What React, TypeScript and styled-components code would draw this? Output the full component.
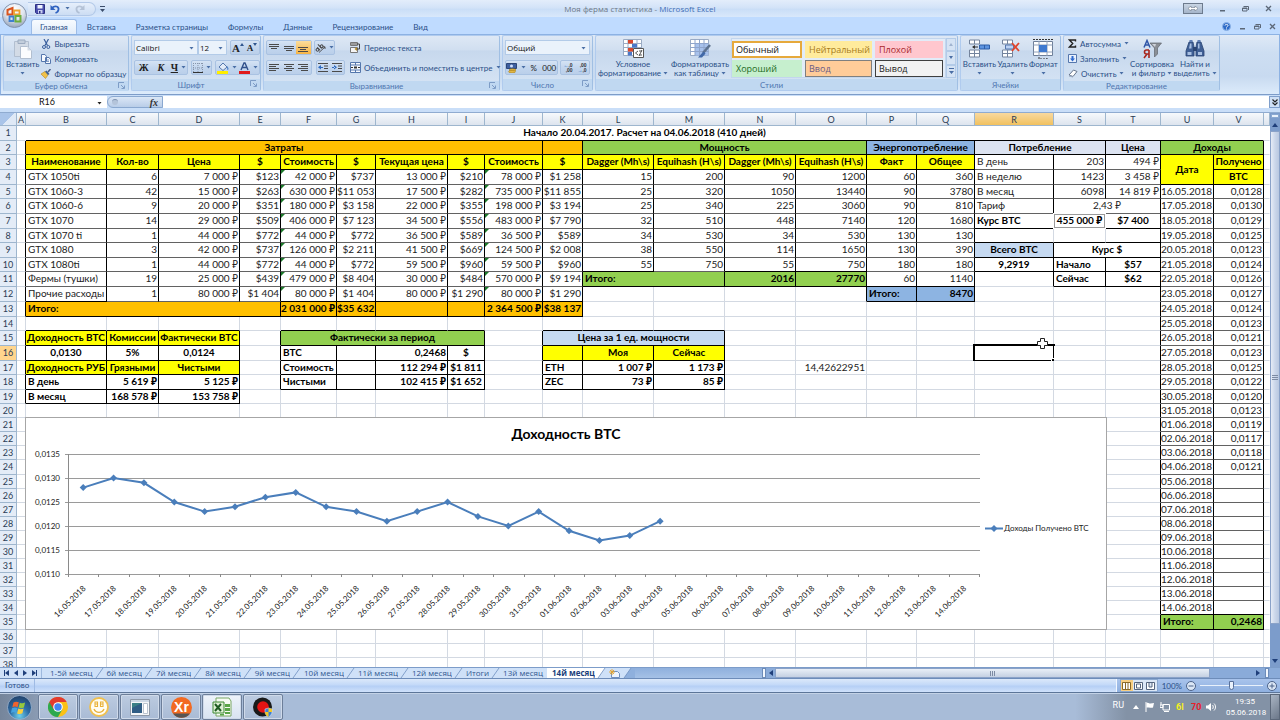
import React from "react";
import styled, { createGlobalStyle, css } from "styled-components";

const UI = 'Lato, "Noto Sans", sans-serif';
const WIDE = '"Open Sans", "Noto Sans", sans-serif';
const SHEET = 'Lato, "Noto Sans", sans-serif';

const Global = createGlobalStyle`
  * { box-sizing: border-box; }
  body { margin: 0; font-family: ${UI}; font-size: 8px; line-height: 10px; color: #2a4f87; overflow: hidden; }
  button, input, select { font: inherit; color: inherit; margin: 0; padding: 0; border: 0; background: none; }
  svg { display: block; flex: none; }
`;

/* ---------- frame ---------- */

const Shell = styled.div`
  display: flex;
  flex-direction: column;
  height: 100vh;
  background: #bfdbff;
`;

const TitleBar = styled.header`
  position: relative;
  display: grid;
  grid-template-columns: 1fr auto 1fr;
  align-items: center;
  height: 17px;
  background: linear-gradient(#e3edfb, #d3e3f8 45%, #cadef7 55%, #d9e8fb);
`;

const QuickAccess = styled.div`
  display: flex;
  align-items: center;
  gap: 4px;
  padding-left: 28px;
`;

const QuickPill = styled.div`
  display: flex;
  align-items: center;
  gap: 5px;
  height: 14px;
  width: 68px;
  padding-left: 7px;
  border: 1px solid #b3c9e8;
  border-left: 0;
  border-radius: 0 7px 7px 0;
  background: linear-gradient(#e6effb, #ccddf3);
`;

const Orb = styled.button`
  position: absolute;
  left: 2px;
  top: 3px;
  width: 25px;
  height: 25px;
  z-index: 2;
`;

const WindowTitle = styled.h1`
  margin: 0;
  font-family: ${WIDE};
  font-size: 8px;
  line-height: 12px;
  font-weight: 400;
  color: #6d7785;
  span { color: #3f6db5; }
`;

const WindowButtons = styled.div<{ $gap: number; $pad: number }>`
  display: flex;
  align-items: center;
  justify-content: flex-end;
  gap: ${(p) => p.$gap}px;
  padding-right: ${(p) => p.$pad}px;
  margin-left: auto;
`;

const PlainButton = styled.button`
  display: flex;
  align-items: center;
  justify-content: center;
`;

const Resizer = styled(PlainButton)`
  width: 20px;
  height: 11px;
  border: 1px solid #6d7b8e;
  background: linear-gradient(#c9d5e4, #a5b5ca);
`;

const TabStrip = styled.nav`
  display: flex;
  align-items: stretch;
  height: 17px;
  padding: 2px 0 0 31px;
  background: #bfdbff;
`;

const RibbonTab = styled.button<{ $on?: boolean }>`
  padding: 0 ${(p) => (p.$on ? 8 : 10)}px;
  line-height: 14px;
  ${(p) =>
    p.$on &&
    css`
      background: linear-gradient(#f7fbff, #e3edf9);
      border: 1px solid #9dbce6;
      border-bottom: 0;
      border-radius: 3px 3px 0 0;
    `}
`;

/* ---------- ribbon ---------- */

const RibbonBar = styled.section`
  display: flex;
  gap: 2px;
  height: 61px;
  padding: 0 2px 3px;
  border: 1px solid #8db2e3;
  border-bottom: 1px solid #7d9cc8;
  background: linear-gradient(#dfe9f6, #cddef2 30%, #c8daf0 70%, #dcebfb);
`;

const Group = styled.section<{ $w: number }>`
  display: flex;
  flex-direction: column;
  width: ${(p) => p.$w}px;
  border: 1px solid #b0cbee;
  border-right-color: #a0bfe3;
  border-radius: 2px;
  background: linear-gradient(#dee8f5, #d1dff0 25%, #c7d8ed 28%, #d7e5f5);
`;

const GroupBody = styled.div<{ $gap?: number; $pad?: number }>`
  display: flex;
  flex: 1;
  gap: ${(p) => p.$gap ?? 0}px;
  padding: 0 ${(p) => p.$pad ?? 2}px;
`;

const GroupFooter = styled.footer`
  position: relative;
  display: flex;
  align-items: center;
  justify-content: center;
  height: 11px;
  padding-right: 10px;
  color: #4f76b0;
  background: #c0d8f1;
`;

const Launcher = styled.button`
  position: absolute;
  right: 3px;
  top: 1px;
`;

const Stack = styled.div<{ $gap?: number; $top?: number }>`
  display: flex;
  flex-direction: column;
  gap: ${(p) => p.$gap ?? 0}px;
  padding-top: ${(p) => p.$top ?? 0}px;
`;

const Line = styled.div<{ $gap?: number }>`
  display: flex;
  align-items: center;
  gap: ${(p) => p.$gap ?? 0}px;
`;

const BigButton = styled.button<{ $w: number }>`
  display: flex;
  flex-direction: column;
  align-items: center;
  width: ${(p) => p.$w}px;
  padding-top: 2px;
  line-height: 9px;
  white-space: nowrap;
`;

const BigIcon = styled.span`
  display: flex;
  align-items: center;
  height: 22px;
`;

const BigCaret = styled.span`
  padding-top: 3px;
`;

const SmallButton = styled.button`
  display: flex;
  align-items: center;
  gap: 3px;
  height: 15px;
  white-space: nowrap;
`;

const Cluster = styled.div<{ $w: number; $push?: boolean }>`
  display: flex;
  width: ${(p) => p.$w}px;
  height: 15px;
  margin-left: ${(p) => (p.$push ? "auto" : 0)};
  border: 1px solid #a9c2e2;
  border-radius: 2px;
  background: linear-gradient(#d5e3f4, #c3d6ee 50%, #bacfea);
`;

const Tool = styled.button<{ $on?: boolean }>`
  display: flex;
  flex: 1;
  align-items: center;
  justify-content: center;
  gap: 3px;
  color: #222;
  ${(p) => p.$on && "background: linear-gradient(#fbdd9c, #f6b445);"}
`;

const SelectWrap = styled.label<{ $w: number }>`
  position: relative;
  display: flex;
  width: ${(p) => p.$w}px;
  height: 15px;
  border: 1px solid #b3cbe8;
  background: #eaf2fb;
  color: #111;
  font-family: ${WIDE};
  select { appearance: none; width: 100%; padding-left: 1px; outline: 0; }
  svg { position: absolute; right: 3px; top: 6px; pointer-events: none; }
`;

const Divider = styled.i`
  width: 1px;
  height: 42px;
  margin: 3px 3px 0 2px;
  background: #a9c2e2;
`;

const Gallery = styled.div`
  display: grid;
  grid-template-columns: 70px 67px 68px;
  grid-auto-rows: 17px;
  gap: 2px 3px;
  padding: 2px 2px 0 0;
  height: 40px;
  margin-top: 2px;
  background: #e2ecf8;
  border: 1px solid #c3d6ee;
`;

const StyleSwatch = styled.button<{ $bg: string; $fg: string; $bd?: string; $thick?: boolean }>`
  padding-left: ${(p) => (p.$thick ? 2 : 3)}px;
  text-align: left;
  font-family: ${WIDE};
  font-size: 9px;
  line-height: 12px;
  background: ${(p) => p.$bg};
  color: ${(p) => p.$fg};
  border: ${(p) => (p.$thick ? 2 : 1)}px solid ${(p) => p.$bd ?? p.$bg};
`;

const GalleryScroll = styled.div`
  display: grid;
  grid-template-rows: repeat(3, 1fr);
  width: 10px;
  height: 40px;
  margin: 2px 0 0 0;
  button { display: flex; align-items: center; justify-content: center; border: 1px solid #b3cbe8; background: #d5e3f4; }
`;

/* ---------- formula bar ---------- */

const FormulaBar = styled.div`
  display: flex;
  height: 18px;
  padding: 1px 0 4px;
  background: #c9def8;
  border-bottom: 1px solid #8fabd0;
`;

const NameBox = styled.label`
  position: relative;
  display: flex;
  width: 107px;
  background: #fff;
  color: #111;
  input { width: 94px; text-align: center; font-size: 9px; }
  svg { position: absolute; right: 5px; top: 6px; }
`;

const FxArea = styled.div`
  display: flex;
  justify-content: space-between;
  align-items: center;
  width: 56px;
  padding: 0 4px;
  border-radius: 7px 0 0 7px;
  border: 1px solid #8aa8d0;
  background: linear-gradient(#dbe7f6, #b9cde8);
  button { font: italic 700 10px "Liberation Serif", serif; color: #333; }
`;

const Knob = styled.i`
  width: 6px;
  height: 6px;
  border-radius: 50%;
  background: #b4c4da;
  border-top: 1px solid #7f93b0;
`;

const FormulaInput = styled.input`
  flex: 1;
  background: #fff !important;
`;

const ExpandButton = styled(PlainButton)`
  width: 11px;
  background: #cfe0f5;
  border: 1px solid #7f9fcb;
`;

/* ---------- sheet ---------- */

const Workspace = styled.main`
  display: flex;
  flex: 1;
  min-height: 0;
`;

const SheetView = styled.div`
  position: relative;
  flex: 1;
  min-width: 0;
  overflow: hidden;
  background: #fff;
`;

const Grid = styled.table`
  width: 100%;
  table-layout: fixed;
  border-collapse: separate;
  border-spacing: 0;
  font-family: ${SHEET};
  font-size: 10px;
  line-height: 11px;
  color: #222;
`;

const ColHead = styled.th<{ $on?: boolean }>`
  height: 13px;
  padding: 0;
  font-weight: 400;
  font-size: 9px;
  line-height: 11px;
  color: #2b3c55;
  border-right: 1px solid #9eb6ce;
  border-bottom: 1px solid #9eb6ce;
  background: ${(p) => (p.$on ? "linear-gradient(#f9d99f, #f1c15f)" : "linear-gradient(#f6f9fc, #dde4ee)")};
`;

const Corner = styled(ColHead)`
  background: linear-gradient(135deg, #a9c4e9 50%, #dfe9f6 50%);
`;

const RowHead = styled.th<{ $on?: boolean; $h: number }>`
  height: ${(p) => p.$h}px;
  padding: 0;
  font-weight: 400;
  font-size: 9px;
  line-height: 12px;
  color: #2b3c55;
  border-right: 1px solid #9eb6ce;
  border-bottom: 1px solid #9eb6ce;
  background: ${(p) => (p.$on ? "#ffd58d" : "#e4ecf7")};
`;

const ALIGN = { l: "left", c: "center", r: "right" } as const;

const Td = styled.td<{ $a: "l" | "c" | "r"; $b?: boolean; $bg?: string; $right: string; $bottom: string }>`
  position: relative;
  padding: ${(p) => ({ l: "0 0 1px 2px", c: "0 0 1px", r: "0 1px 1px 0" })[p.$a]};
  white-space: nowrap;
  text-align: ${(p) => ALIGN[p.$a]};
  font-weight: ${(p) => (p.$b ? 700 : 400)};
  color: ${(p) => (p.$b ? "#000" : "#222")};
  background: ${(p) => p.$bg ?? "#fff"};
  border-right: 1px solid ${(p) => p.$right};
  border-bottom: 1px solid ${(p) => p.$bottom};
`;

const ErrorFlag = styled.i`
  position: absolute;
  left: 0;
  top: 0;
  border-top: 4px solid #1d7a2c;
  border-right: 4px solid transparent;
`;

const Selection = styled.i`
  position: absolute;
  inset: -2px;
  border: 2px solid #000;
  &::after {
    content: "";
    position: absolute;
    right: -3px;
    bottom: -3px;
    width: 4px;
    height: 4px;
    background: #000;
    border: solid #fff;
    border-width: 1px 0 0 1px;
  }
`;

const CopyFrame = styled.i`
  position: absolute;
  inset: -1px;
  border: 1px solid #fff;
  outline: 1px solid #9a9a9a;
  outline-offset: -2px;
`;

const ChartFrame = styled.figure`
  position: absolute;
  left: 25px;
  top: 304px;
  margin: 0;
  border: 1px solid #a6a6a6;
  background: #fff;
  font-family: ${SHEET};
`;

const Pointer = styled.div`
  position: absolute;
  left: 1037px;
  top: 225px;
`;

const VScroll = styled.div`
  display: flex;
  flex-direction: column;
  width: 10px;
  background: #7c9ccb;
`;

const VSplit = styled.i`
  height: 4px;
  margin: 1px;
  background: #e9f1fb;
  border: 1px solid #8aa8d0;
`;

const VThumb = styled.div`
  display: flex;
  align-items: center;
  justify-content: center;
  flex: 498 0 0;
  border: 1px solid #8aa2c8;
  background: linear-gradient(90deg, #e6ecf6, #cbd7ea 50%, #b9c8e0);
`;

const VRest = styled.div`
  display: flex;
  flex: 41 0 0;
  align-items: flex-end;
  justify-content: center;
  padding-bottom: 3px;
`;

const ScrollArrow = styled(PlainButton)`
  min-width: 9px;
  height: 12px;
`;

/* ---------- sheet tabs ---------- */

const SheetBar = styled.nav`
  display: flex;
  height: 12px;
  border-top: 1px solid #7c9cc9;
  border-bottom: 1px solid #6d8cb9;
  background: linear-gradient(#8fb0dd, #a5c1e6);
  font-family: ${WIDE};
`;

const NavButtons = styled.div`
  display: flex;
  align-items: center;
  justify-content: space-between;
  width: 42px;
  padding: 0 4px;
  background: #cfe1f8;
  border-right: 1px solid #9eb9de;
`;

const TabList = styled.div`
  display: flex;
  padding-left: 8px;
  background: #cfe1f8;
`;

const SheetTab = styled.button<{ $on?: boolean }>`
  display: flex;
  align-items: center;
  color: ${(p) => (p.$on ? "#1b3f7c" : "#2f568f")};
  font-weight: ${(p) => (p.$on ? 700 : 400)};
  background: ${(p) => (p.$on ? "#fff" : "#cfe1f8")};
  padding-left: ${(p) => (p.$on ? 5 : 0)}px;
  line-height: 10px;
  white-space: nowrap;
`;

const HScroll = styled.div`
  display: flex;
  align-items: center;
  flex: 0 1 518px;
  margin-left: auto;
  background: #8aabd9;
`;

const HSplit = styled.i`
  width: 4px;
  height: 10px;
  background: #f3f8fe;
  border: 1px solid #6d8cb9;
`;

const HThumb = styled.div`
  display: flex;
  align-items: center;
  justify-content: center;
  flex: 432 0 0;
  height: 10px;
  border: 1px solid #8aa2c8;
  background: linear-gradient(#e9eff7, #c4d0e2);
`;

const HRest = styled.div`
  display: flex;
  justify-content: flex-end;
  flex: 51 0 0;
  padding-right: 4px;
`;

/* ---------- status bar ---------- */

const StatusBar = styled.footer`
  display: flex;
  align-items: stretch;
  height: 14px;
  border-bottom: 1px solid #5c7598;
  background: linear-gradient(#dbe8fa, #c3d9f8 45%, #b5cff5 55%, #cfe1fb);
`;

const StatusText = styled.div`
  width: 35px;
  padding-left: 5px;
  line-height: 13px;
  border-right: 1px solid #9fbbe4;
`;

const StatusTools = styled.div`
  display: flex;
  align-items: center;
  gap: 4px;
  margin-left: auto;
  padding: 0 3px;
  border-left: 1px solid #f2f7fe;
  background: linear-gradient(#a9c4ec, #8fb0e0);
`;

const Views = styled.div`
  display: flex;
  border: 1px solid #8aa8d0;
  background: #dbe7f6;
`;

const ViewButton = styled(PlainButton)<{ $on?: boolean }>`
  width: 12px;
  height: 11px;
  background: ${(p) => (p.$on ? "#f8cf83" : "transparent")};
`;

const Zoom = styled.input`
  width: 63px;
  height: 11px;
  appearance: none;
  background: linear-gradient(transparent 5px, #e9f1fb 5px, #e9f1fb 6px, transparent 6px);
  &::-webkit-slider-thumb {
    appearance: none;
    width: 5px;
    height: 9px;
    border: 1px solid #58709a;
    border-radius: 0 0 3px 3px;
    background: #e9f1fb;
  }
`;

/* ---------- taskbar ---------- */

const Taskbar = styled.footer`
  display: flex;
  height: 27px;
  border-top: 1px solid #c3d2e6;
  background: linear-gradient(90deg, #a8bcd8 84%, #8392a6 88%);
`;

const StartButton = styled(PlainButton)`
  width: 38px;
  background: linear-gradient(90deg, #75859b, #8a9bb3);
`;

const TaskButton = styled(PlainButton)<{ $on?: boolean }>`
  width: 40px;
  margin-right: 1px;
  border: 1px solid #6c7e99;
  border-radius: 2px;
  box-shadow: inset 0 0 0 1px #cfdaea;
  background: ${(p) => (p.$on ? "linear-gradient(#eef3fa, #d8e3f1)" : "linear-gradient(#bccbe0, #a9bbd5)")};
`;

const Tray = styled.div`
  display: flex;
  align-items: center;
  gap: 6px;
  margin-left: auto;
  color: #fff;
  font-family: Roboto, "Noto Sans", sans-serif;
`;

const Language = styled.span`
  margin-right: 3px;
  padding-bottom: 4px;
  font-size: 9px;
`;

const Reading = styled.b<{ $c: string }>`
  width: 9px;
  font-size: 9px;
  color: ${(p) => p.$c};
`;

const Clock = styled.time`
  width: 38px;
  margin-left: 4px;
  text-align: center;
  line-height: 11px;
  white-space: nowrap;
`;

const ShowDesktop = styled.button`
  width: 10px;
  height: 26px;
  border: 1px solid #5b6779 !important;
  background: linear-gradient(135deg, #a9b4c3, #6b7789) !important;
`;

/* ---------- icons ---------- */

const Caret = ({ c = "#4a6ea5" }: { c?: string }) => (
  <svg width="5" height="3" viewBox="0 0 5 3"><path d="M0.500 0h4L2.500 2.500z" fill={c} /></svg>
);
const LaunchIcon = () => (
  <svg width="7" height="7" viewBox="0 0 7 7" fill="none" stroke="#7d9cc6"><path d="M.5 6V.5H6M3 3l3 3M6.500 3.500v3h-3" /></svg>
);
const MinIcon = () => <svg width="7" height="7" viewBox="0 0 7 7"><path d="M1 5h5v1.500H1z" fill="#5c6878" /></svg>;
const RestoreIcon = () => (
  <svg width="7" height="7" viewBox="0 0 7 7" fill="none" stroke="#5c6878"><path d="M1.500 1.500h5v3.500M.5 3h4.500v3H.5zM.5 3.500h4.500" /></svg>
);
const CloseIcon = () => (
  <svg width="7" height="7" viewBox="0 0 7 7" stroke="#5c6878" strokeWidth="1.300"><path d="M1 1l5 5M6 1L1 6" /></svg>
);
const OfficeOrb = () => (
  <svg width="25" height="25" viewBox="0 0 25 25">
    <defs>
      <radialGradient id="orb" cx=".5" cy=".25" r=".8">
        <stop offset="0" stopColor="#fff" /><stop offset=".5" stopColor="#dfe5ee" /><stop offset="1" stopColor="#8e9db5" />
      </radialGradient>
    </defs>
    <circle cx="12.500" cy="12.500" r="12" fill="url(#orb)" stroke="#8494ad" />
    <path d="M5.500 7l5-2v6.500h-5z" fill="none" stroke="#d9541e" strokeWidth="2" />
    <path d="M12 7.500h5.500v4H12z" fill="none" stroke="#eda12e" strokeWidth="1.800" />
    <path d="M7.500 13.500h4v4.500h-4z" fill="none" stroke="#3f7fd0" strokeWidth="1.800" />
    <path d="M13.500 13h5v5.500h-5z" fill="none" stroke="#6cae3e" strokeWidth="2" />
  </svg>
);
const SaveIcon = () => (
  <svg width="10" height="10" viewBox="0 0 10 10">
    <path d="M.5.5h9v9h-8l-1-1z" fill="#4b4fae" stroke="#2e3285" /><path d="M2.500 1h5v3.500h-5z" fill="#eef3ff" /><path d="M3 6h4.500v3.500H3z" fill="#c9cff0" /><path d="M4 7h1.500v2.500H4z" fill="#2e3285" />
  </svg>
);
const UndoIcon = ({ flip }: { flip?: boolean }) => (
  <svg width="10" height="10" viewBox="0 0 10 10" fill="none" opacity={flip ? 0.4 : 1}>
    <g transform={flip ? "matrix(-1 0 0 1 10 0)" : undefined}>
      <path d="M2 4c3-3 7-1.500 6.500 1.500C8.300 7.500 7 8.500 5.500 9" stroke={flip ? "#7d8da5" : "#2f62c0"} strokeWidth="1.800" /><path d="M.5 1v5h5z" fill={flip ? "#7d8da5" : "#2f62c0"} />
    </g>
  </svg>
);
const HelpIcon = () => (
  <svg width="9" height="9" viewBox="0 0 9 9"><circle cx="4.500" cy="4.500" r="4" fill="#2d6bc8" stroke="#8fb4e6" /><path d="M3 3.500C3 2 6 2 6 3.500 6 4.500 4.500 4.500 4.500 5.500M4.500 6.500v1" stroke="#fff" fill="none" /></svg>
);
const PasteIcon = () => (
  <svg width="20" height="20" viewBox="0 0 20 20">
    <path d="M1.500 2.500h14v15h-14z" fill="#d3dbe6" stroke="#b2bfd0" /><path d="M5 1h7v3.500H5z" fill="#c3cedc" stroke="#9cabc0" />
    <path d="M7.500 7.500h7l4 4v8h-11z" fill="#fbfcfe" stroke="#b2bfd0" /><path d="M14.500 7.500v4h4z" fill="#d3dbe6" />
  </svg>
);
const CutIcon = () => (
  <svg width="10" height="10" viewBox="0 0 10 10" fill="none" stroke="#3a5f9d"><path d="M3 0l3.500 6.500M7.500 0L4 6.500" strokeWidth="1.200" /><circle cx="3" cy="8" r="1.500" /><circle cx="7.300" cy="8" r="1.500" /></svg>
);
const CopyIcon = () => (
  <svg width="10" height="10" viewBox="0 0 10 10" fill="#f5f9ff" stroke="#5577ad"><path d="M.5.5H4l1.500 2v5h-5zM4.500 3.500H8l1.500 2v4h-5z" /><path d="M6 6h2M6 7.500h2" strokeWidth=".7" /></svg>
);
const BrushIcon = () => (
  <svg width="10" height="10" viewBox="0 0 10 10"><path d="M0 5l4-2.500L7 6 4.500 9.500z" fill="#f1c24a" stroke="#b98a1c" strokeWidth=".6" /><path d="M4 2.500l1.500-1 3 3.500-1.500 1z" fill="#3b5f94" /><path d="M7 3l2.500-3" stroke="#4a5f86" strokeWidth="1.500" /></svg>
);
const Lines = ({ rows, c = "#4a4a4a" }: { rows: [number, number, number][]; c?: string }) => (
  <svg width="11" height="10" viewBox="0 0 11 10" fill={c}>{rows.map(([x, y, w]) => <rect key={y} x={x} y={y} width={w} height="1" />)}</svg>
);
const BordersIcon = () => (
  <svg width="10" height="10" viewBox="0 0 10 10" fill="none" stroke="#8795ab"><path d="M.5 0v9M5 0v9M9.500 0v9M0 .5h10M0 5h10" strokeDasharray="1 1" /><path d="M0 9.500h10" stroke="#333" /></svg>
);
const FillIcon = () => (
  <svg width="12" height="12" viewBox="0 0 12 12"><path d="M2 5l4-4 4 4-4 3.500z" fill="#e3ecf8" stroke="#5577ad" /><path d="M10 4c2 2 1.500 4 .5 4z" fill="#2f6bc0" /><path d="M0 9h11v3H0z" fill="#ffee00" /></svg>
);
const FontColorIcon = () => (
  <svg width="11" height="12" viewBox="0 0 11 12"><path d="M2 8l3-7h1l3 7M3.500 5.500h4" fill="none" stroke="#2f4f8a" strokeWidth="1.400" /><path d="M0 9h11v3H0z" fill="#e01b1b" /></svg>
);
const OrientIcon = () => (
  <svg width="11" height="10" viewBox="0 0 11 10" fill="none" stroke="#4a4a4a">
    <g transform="rotate(-45 5 5)"><circle cx="2" cy="4.500" r="1.400" /><path d="M3.500 2.500v4M6 1v5.500" /><circle cx="7.400" cy="5" r="1.400" /></g>
    <path d="M4 9.500L10 4M7.500 3.800H10V6" strokeWidth=".9" />
  </svg>
);
const IndentIcon = ({ right }: { right?: boolean }) => (
  <svg width="11" height="10" viewBox="0 0 11 10"><path d="M0 0h10v1H0zM6 2.500h4v1H6zM6 5h4v1H6zM0 8h10v1H0z" fill="#4a4a4a" /><path d={right ? "M5 4.300L2 2v4.500zM0 4h3v1H0z" : "M0 4.300L3 2v4.500zM2 4h3v1H2z"} fill="#2f6bc0" /></svg>
);
const WrapIcon = () => (
  <svg width="11" height="11" viewBox="0 0 11 11"><path d="M.5.5h7v3h-7zM.5 5.500h7v5h-7z" fill="#f5f5f5" stroke="#777" /><path d="M1 2h8.500v5H6" fill="none" stroke="#444" /><path d="M7 5v4L4.500 7z" fill="#b08a2c" /></svg>
);
const MergeIcon = () => (
  <svg width="11" height="11" viewBox="0 0 11 11"><path d="M.5.5h10v10H.5z" fill="#f5f9ff" stroke="#5577ad" /><path d="M.5 3h10M.5 8h10M5.500 0v3M5.500 8v3" stroke="#5577ad" /><path d="M1 5.500h2M8 5.500h2" stroke="#333" /><path d="M4 4.500h3v2H4z" fill="#333" /></svg>
);
const MoneyIcon = () => (
  <svg width="12" height="10" viewBox="0 0 12 10"><path d="M.5.5h10v5H.5z" fill="#3e5f9f" stroke="#2c4678" /><circle cx="5.500" cy="3" r="1.500" fill="#cfe0ff" /><ellipse cx="6.500" cy="7" rx="3.500" ry="1.200" fill="#e4b948" stroke="#9c7412" strokeWidth=".5" /><ellipse cx="6" cy="8.700" rx="3.500" ry="1.200" fill="#e4b948" stroke="#9c7412" strokeWidth=".5" /></svg>
);
const DecimalTool = styled.span`
  display: grid;
  font: 700 5px/5px "Liberation Sans", sans-serif;
  color: #333;
  text-align: right;
  em { font-style: normal; color: #2f6bc0; }
`;
const CondIcon = () => (
  <svg width="21" height="20" viewBox="0 0 21 20">
    <path d="M.5.5h18v16H.5z" fill="#fff" stroke="#9aabc4" /><path d="M.5 4.500h18M.5 8.500h18M.5 12.500h18M5 0v17M14 0v17" stroke="#9aabc4" />
    <path d="M5 1h5v3.500H5zM5 9h5v3.500H5z" fill="#d9482e" /><path d="M9 5h5v3.500H9zM5 13h4v3.500H5z" fill="#4a78c8" />
    <path d="M10.500 9.500h10v9h-10z" fill="#fff" stroke="#555" /><path d="M12.500 14l2.500-2M12.500 14l2.500 2M16 12h3M16 16h3M19 11l-3 6" stroke="#444" fill="none" strokeWidth=".9" />
  </svg>
);
const TableIcon = () => (
  <svg width="21" height="20" viewBox="0 0 21 20">
    <path d="M.5.5h18v16H.5z" fill="#fff" stroke="#9aabc4" /><path d="M5 5h13.500v11.500H5z" fill="#a7c1ec" /><path d="M.5 4.500h18M.5 8.500h18M.5 12.500h18M5 0v17M9.500 0v17M14 0v17" stroke="#8fa5cc" />
    <path d="M20 6l-7 8" stroke="#5d728f" strokeWidth="2.500" /><path d="M13.500 12.500l2 2-3.500 4H8z" fill="#4169a8" />
  </svg>
);
const CellsIcon = ({ kind }: { kind: "insert" | "delete" | "format" }) =>
  kind === "format" ? (
    <svg width="21" height="20" viewBox="0 0 21 20"><path d="M.5 2.500h19v14H.5z" fill="#fff" stroke="#6e7f99" /><path d="M.5 6h19M.5 13h19M6 2v15M14 2v15" stroke="#8fa0ba" /><path d="M6 6h8v7H6z" fill="#3f7ad0" /><path d="M0 .5h20M6 18v2h8v-2" stroke="#333" fill="none" strokeDasharray="2 1" /></svg>
  ) : (
    <svg width="21" height="20" viewBox="0 0 21 20">
      <path d="M.5 1h10v4H.5zM.5 11h10v7H.5z" fill="#fff" stroke="#74849d" /><path d="M5.500 1v4M5.500 11v7M.5 14.500h10" stroke="#74849d" />
      {kind === "insert" ? (
        <><path d="M10.500 6h10v4h-10z" fill="#5d94e0" stroke="#2f5fa8" /><path d="M15.500 6v4" stroke="#2f5fa8" /><path d="M4 8h5" stroke="#333" /><path d="M6 6v4L3 8z" fill="#333" /></>
      ) : (
        <><path d="M3.500 6h8v4h-8z" fill="#bcd2f3" stroke="#5577ad" /><path d="M10 4l7 8M17 4l-7 8" stroke="#e0452b" strokeWidth="1.800" /></>
      )}
    </svg>
  );
const SigmaIcon = () => <svg width="9" height="9" viewBox="0 0 9 9"><path d="M7.500 2.500V1H1.500l3.200 3.500L1.500 8h6V6.500" fill="none" stroke="#222" strokeWidth="1.400" /></svg>;
const FillDownIcon = () => <svg width="9" height="9" viewBox="0 0 9 9"><path d="M.5.5h8v8h-8z" fill="#e9f1fd" stroke="#5577ad" /><path d="M3.500 2h2v2.500H7L4.500 7.500 2 4.500h1.500z" fill="#2f6bd0" /></svg>;
const EraserIcon = () => <svg width="10" height="9" viewBox="0 0 10 9"><path d="M1 6l4.500-5L9 2.500 5 7.500z" fill="#fff" stroke="#66758c" /><path d="M1 6l4 1.500v1L1 7.500z" fill="#9aa9bf" /></svg>;
const SortIcon = () => (
  <svg width="20" height="20" viewBox="0 0 20 20" fill="none">
    <path d="M2 8.500l3-7 3 7M3 6h4" stroke="#2f55a8" strokeWidth="1.500" /><path d="M7 11v8M7 11H4.500a2 2 0 000 4H7M5 15l-3 4" stroke="#a8261d" strokeWidth="1.600" />
    <path d="M8 4h11.500l-4 5v6l-3 3V9z" fill="#8b8f96" stroke="#60656e" strokeWidth=".7" /><path d="M10 5h4l-1 3z" fill="#cfd3da" />
  </svg>
);
const BinocularsIcon = () => (
  <svg width="20" height="18" viewBox="0 0 20 18"><path d="M4 2h4l1 5v9H1v-5zM12 2h4l3 9v5h-8V7z" fill="#3f5f95" stroke="#2b4573" strokeWidth=".8" /><path d="M8 7h4v4H8z" fill="#2b4573" /><path d="M2.500 12h4v3h-4zM13 12h4v3h-4zM5 3.500h1.500v5H4zM13 3.500h1.500v5H13z" fill="#a8bfe2" /><path d="M4.500 0h3v2h-3zM12.500 0h3v2h-3z" fill="#5f7fb5" /></svg>
);
const Arrow = ({ d, bar }: { d: "l" | "r" | "u" | "d"; bar?: boolean }) => {
  const path = { l: "M5 0v6L1 3z", r: "M1 0v6l4-3z", u: "M0 5h6L3 1z", d: "M0 1h6L3 5z" }[d];
  return <svg width="6" height="6" viewBox="0 0 6 6" fill="#1f3f7a"><path d={path} />{bar && <path d={d === "l" ? "M0 0h1v6H0z" : "M5 0h1v6H5z"} />}</svg>;
};
const Slant = ({ left, right }: { left: string; right: string }) => (
  <svg width="14" height="10" viewBox="0 0 14 10"><path d="M0 0h10L3 10H0z" fill={left} /><path d="M10 0h4v10H3z" fill={right} /><path d="M10 0L3 10" stroke="#6f8fbf" strokeWidth=".8" /></svg>
);

/* ---------- sheet model ---------- */

type Align = "l" | "c" | "r";
type Cell = { v?: string; a?: Align; b?: boolean; bg?: string; cs?: number; rs?: number; flag?: boolean };

const ORANGE = "#ffc000";
const YELLOW = "#ffff00";
const GREEN = "#92d050";
const BLUE = "#8db4e2";
const PALE = "#dce3f1";
const SKY = "#c5d9f1";

const COLS = "ABCDEFGHIJKLMNOPQRSTUV".split("");
const WIDTHS = [9, 81, 52, 81, 41, 56, 39, 72, 37, 58, 40, 71, 71, 71, 71, 50, 58, 79, 52, 55, 53, 50];
const HEIGHTS = [
  15, 14, 15, 15, 14, 15, 15, 14, 15, 14, 15, 15, 15, 14, 15, 15, 14, 15, 14, 14,
  14, 14, 14, 15, 14, 14, 14, 14, 14, 14, 14, 14, 14, 14, 15, 14, 14, 15,
];

const cells: Record<string, Cell> = {};
const put = (col: string, row: number, cell: Cell) => { cells[col + row] = cell; };
const fill = (row: number, from: string, values: string[], base: Cell) => {
  const start = COLS.indexOf(from);
  values.forEach((v, i) => put(COLS[start + i], row, { ...base, v }));
};
const head = (bg: string): Cell => ({ a: "c", b: true, bg });

put("B", 1, { v: "Начало 20.04.2017. Расчет на 04.06.2018 (410 дней)", cs: 21, a: "c", b: true });
put("B", 2, { ...head(ORANGE), v: "Затраты", cs: 9 });
put("K", 2, head(ORANGE));
put("L", 2, { ...head(GREEN), v: "Мощность", cs: 4 });
put("P", 2, { ...head(BLUE), v: "Энергопотребление", cs: 2 });
put("R", 2, { ...head(PALE), v: "Потребление", cs: 2 });
put("T", 2, { ...head(PALE), v: "Цена" });
put("U", 2, { ...head(GREEN), v: "Доходы", cs: 2 });
fill(3, "B", [
  "Наименование", "Кол-во", "Цена", "$", "Стоимость", "$", "Текущая цена", "$", "Стоимость", "$",
  "Dagger (Mh\\s)", "Equihash (H\\s)", "Dagger (Mh\\s)", "Equihash (H\\s)", "Факт", "Общее",
], head(YELLOW));

const RIGS = [
  "GTX 1050ti|6|7 000 ₽|$123|42 000 ₽|$737|13 000 ₽|$210|78 000 ₽|$1 258|15|200|90|1200|60|360",
  "GTX 1060-3|42|15 000 ₽|$263|630 000 ₽|$11 053|17 500 ₽|$282|735 000 ₽|$11 855|25|320|1050|13440|90|3780",
  "GTX 1060-6|9|20 000 ₽|$351|180 000 ₽|$3 158|22 000 ₽|$355|198 000 ₽|$3 194|25|340|225|3060|90|810",
  "GTX 1070|14|29 000 ₽|$509|406 000 ₽|$7 123|34 500 ₽|$556|483 000 ₽|$7 790|32|510|448|7140|120|1680",
  "GTX 1070 ti|1|44 000 ₽|$772|44 000 ₽|$772|36 500 ₽|$589|36 500 ₽|$589|34|530|34|530|130|130",
  "GTX 1080|3|42 000 ₽|$737|126 000 ₽|$2 211|41 500 ₽|$669|124 500 ₽|$2 008|38|550|114|1650|130|390",
  "GTX 1080ti|1|44 000 ₽|$772|44 000 ₽|$772|59 500 ₽|$960|59 500 ₽|$960|55|750|55|750|180|180",
  "Фермы (тушки)|19|25 000 ₽|$439|479 000 ₽|$8 404|30 000 ₽|$484|570 000 ₽|$9 194",
  "Прочие расходы|1|80 000 ₽|$1 404|80 000 ₽|$1 404|80 000 ₽|$1 290|80 000 ₽|$1 290",
];
RIGS.forEach((line, i) => {
  const row = i + 4;
  fill(row, "B", line.split("|"), { a: "r" });
  cells["B" + row].a = "l";
  cells["F" + row].flag = true;
  cells["J" + row].flag = true;
});

put("B", 13, { v: "Итого:", b: true, bg: ORANGE, cs: 4 });
fill(13, "F", ["2 031 000 ₽", "$35 632", "", "", "2 364 500 ₽", "$38 137"], { a: "r", b: true, bg: ORANGE });
put("L", 11, { v: "Итого:", b: true, bg: GREEN, cs: 2 });
fill(11, "N", ["2016", "27770"], { a: "r", b: true, bg: GREEN });
fill(11, "P", ["60", "1140"], { a: "r" });
fill(12, "P", ["Итого:", "8470"], { a: "r", b: true, bg: BLUE });
cells.P12.a = "l";

[["В день", "203", "494 ₽"], ["В неделю", "1423", "3 458 ₽"], ["В месяц", "6098", "14 819 ₽"]].forEach((line, i) => {
  fill(i + 3, "R", line, { a: "r" });
  cells["R" + (i + 3)].a = "l";
});
put("R", 6, { v: "Тариф" });
put("S", 6, { v: "2,43 ₽", a: "c", cs: 2 });
fill(7, "R", ["Курс ВТС", "455 000 ₽", "$7 400"], { a: "c", b: true });
cells.R7.a = "l";
put("R", 9, { ...head(SKY), v: "Всего ВТС" });
put("S", 9, { v: "Курс $", a: "c", b: true, cs: 2 });
fill(10, "R", ["9,2919", "Начало", "$57"], { a: "c", b: true });
fill(11, "S", ["Сейчас", "$62"], { a: "c", b: true });
cells.S10.a = "l";
cells.S11.a = "l";

const INCOME = [128, 130, 129, 125, 123, 124, 126, 127, 124, 123, 121, 123, 125, 122, 120, 123, 119, 117, 118, 121];
const DATES = Array.from({ length: 30 }, (_, i) => (i < 16 ? `${16 + i}.05.2018` : `${String(i - 15).padStart(2, "0")}.06.2018`));
put("U", 3, { ...head(YELLOW), v: "Дата", rs: 2 });
put("V", 3, { ...head(YELLOW), v: "Получено" });
put("V", 4, { ...head(YELLOW), v: "ВТС" });
DATES.forEach((d, i) => fill(i + 5, "U", [d, INCOME[i] ? `0,0${INCOME[i]}` : ""], { a: "r" }));
fill(35, "U", ["Итого:", "0,2468"], { a: "r", b: true, bg: GREEN });
cells.U35.a = "l";

fill(15, "B", ["Доходность ВТС", "Комиссии", "Фактически ВТС"], head(YELLOW));
fill(16, "B", ["0,0130", "5%", "0,0124"], { a: "c", b: true });
fill(17, "B", ["Доходность РУБ", "Грязными", "Чистыми"], head(YELLOW));
fill(18, "B", ["В день", "5 619 ₽", "5 125 ₽"], { a: "r", b: true });
fill(19, "B", ["В месяц", "168 578 ₽", "153 758 ₽"], { a: "r", b: true });
cells.B18.a = "l";
cells.B19.a = "l";

put("F", 15, { ...head(GREEN), v: "Фактически за период", cs: 4 });
[["ВТС", "", "0,2468", "$"], ["Стоимость", "", "112 294 ₽", "$1 811"], ["Чистыми", "", "102 415 ₽", "$1 652"]].forEach((line, i) => {
  fill(16 + i, "F", line, { a: "r", b: true });
  cells["F" + (16 + i)].a = "l";
  cells["I" + (16 + i)].a = "c";
});

put("K", 15, { ...head(SKY), v: "Цена за 1 ед. мощности", cs: 3 });
fill(16, "K", ["", "Моя", "Сейчас"], head(YELLOW));
fill(17, "K", ["ETH", "1 007 ₽", "1 173 ₽"], { a: "r", b: true });
fill(18, "K", ["ZEC", "73 ₽", "85 ₽"], { a: "r", b: true });
cells.K17.a = "l";
cells.K18.a = "l";
put("O", 17, { v: "14,42622951", a: "r" });

/* Outlined ranges: first column, first row, last column, last row. */
const FRAMES: [string, number, string, number][] = [
  ["B", 2, "K", 13], ["L", 2, "O", 11], ["P", 2, "Q", 12], ["R", 2, "T", 7], ["R", 9, "R", 10],
  ["S", 9, "T", 11], ["U", 2, "V", 35], ["B", 15, "D", 19], ["F", 15, "I", 18], ["K", 15, "M", 18],
];
const frameAt = (c: number, r: number) =>
  FRAMES.findIndex(([a, r1, b, r2]) => c >= COLS.indexOf(a) && c <= COLS.indexOf(b) && r >= r1 && r <= r2);

const covered = new Set<string>();
Object.entries(cells).forEach(([ref, cell]) => {
  const c = COLS.indexOf(ref[0]);
  const r = Number(ref.slice(1));
  for (let dc = 0; dc < (cell.cs ?? 1); dc++)
    for (let dr = 0; dr < (cell.rs ?? 1); dr++) if (dc || dr) covered.add(COLS[c + dc] + (r + dr));
});

const LINE = "#d3d9e2";

const SheetCell = ({ c, r }: { c: number; r: number }) => {
  const ref = COLS[c] + r;
  if (covered.has(ref)) return null;
  const cell = cells[ref] ?? {};
  const lastC = c + (cell.cs ?? 1) - 1;
  const lastR = r + (cell.rs ?? 1) - 1;
  const own = frameAt(c, r);
  const below = frameAt(c, lastR + 1);
  const right = own >= 0 || frameAt(lastC + 1, r) >= 0 ? "#000" : r === 1 ? "#fff" : LINE;
  const strong = cell.bg || cell.b || own !== below || cells[COLS[c] + (lastR + 1)]?.bg;
  const bottom = own >= 0 || below >= 0 ? (strong ? "#000" : "#626262") : LINE;
  return (
    <Td $a={cell.a ?? "l"} $b={cell.b} $bg={cell.bg} $right={right} $bottom={bottom} colSpan={cell.cs} rowSpan={cell.rs}>
      {cell.flag && <ErrorFlag />}
      {cell.v}
      {ref === "R16" && <Selection />}
      {ref === "S7" && <CopyFrame />}
    </Td>
  );
};

/* ---------- chart ---------- */

const STEP = 911 / 30;
const px = (i: number) => 42 + STEP * (i + 0.5);
const py = (v: number) => 36 + (135 - v) * 4.8;

const Chart = () => (
  <ChartFrame>
    <svg width="1080" height="211" viewBox="0 0 1080 211" role="img" aria-label="Доходность ВТС">
      <text x="540" y="21" textAnchor="middle" fontSize="14" fontWeight="700" fill="#000">Доходность ВТС</text>
      {[135, 130, 125, 120, 115, 110].map((v) => (
        <g key={v}>
          <path d={`M39 ${Math.round(py(v)) + 0.5}H954`} stroke="#9a9a9a" />
          <text x="34" y={Math.round(py(v)) + 3} textAnchor="end" fontSize="8" fill="#222">{`0,0${v}`}</text>
        </g>
      ))}
      <path d="M42.500 36v120" stroke="#8a8a8a" />
      {Array.from({ length: 31 }, (_, i) => (
        <path key={i} d={`M${Math.round(42 + STEP * i) + 0.5} 156v3`} stroke="#8a8a8a" />
      ))}
      <polyline points={INCOME.map((v, i) => `${px(i)},${py(v)}`).join(" ")} fill="none" stroke="#4a7ebb" strokeWidth="2" />
      {INCOME.map((v, i) => (
        <path key={i} d={`M${px(i)} ${py(v) - 3.5}l3.500 3.500-3.500 3.500-3.500-3.500z`} fill="#4a7ebb" />
      ))}
      {DATES.map((d, i) => (
        <text key={d} x={px(i) + 3} y="171" transform={`rotate(-45 ${px(i) + 3} 171)`} textAnchor="end" fontSize="8" fill="#222">{d}</text>
      ))}
      <path d="M959 110.500h18" stroke="#4a7ebb" strokeWidth="2" />
      <path d="M968 107l3.500 3.500-3.500 3.500-3.500-3.500z" fill="#4a7ebb" />
      <text x="978" y="113" fontSize="8" fill="#222">Доходы Получено ВТС</text>
    </svg>
  </ChartFrame>
);

/* ---------- composed parts ---------- */

const RibbonGroup = ({ w, title, launch, pad, gap, children }: {
  w: number; title: string; launch?: boolean; pad?: number; gap?: number; children: React.ReactNode;
}) => (
  <Group $w={w} aria-label={title}>
    <GroupBody $pad={pad} $gap={gap}>{children}</GroupBody>
    <GroupFooter>{title}{launch && <Launcher aria-label={`${title}: параметры`}><LaunchIcon /></Launcher>}</GroupFooter>
  </Group>
);

const Big = ({ w, icon, lines }: { w: number; icon: React.ReactNode; lines: string[] }) => (
  <BigButton $w={w}>
    <BigIcon>{icon}</BigIcon>
    <span>{lines[0]}</span>
    {lines[1] ? <Line $gap={2}>{lines[1]}<Caret /></Line> : <BigCaret><Caret /></BigCaret>}
  </BigButton>
);

const Pick = ({ w, label, options }: { w: number; label: string; options: string[] }) => (
  <SelectWrap $w={w}>
    <select aria-label={label}>{options.map((o) => <option key={o}>{o}</option>)}</select>
    <Caret />
  </SelectWrap>
);

const Glyph = styled.span<{ $italic?: boolean; $under?: boolean; $size?: number }>`
  font-family: "Liberation Serif", serif;
  font-weight: 700;
  font-size: ${(p) => p.$size ?? 10}px;
  font-style: ${(p) => (p.$italic ? "italic" : "normal")};
  text-decoration: ${(p) => (p.$under ? "underline" : "none")};
`;

const SizeTool = styled(Tool)`
  gap: 0;
  svg { align-self: flex-start; margin-top: 2px; }
`;

const TABS = ["Главная", "Вставка", "Разметка страницы", "Формулы", "Данные", "Рецензирование", "Вид"];
const SHEETS = ["1-5й месяц", "6й месяц", "7й месяц", "8й месяц", "9й месяц", "10й месяц", "11й месяц", "12й месяц", "Итоги", "13й месяц"];

const TaskIcons = [
  <svg key="c" width="20" height="20" viewBox="0 0 20 20"><circle cx="10" cy="10" r="10" fill="#fbc116" /><path d="M10 10L1.300 5A10 10 0 0118.700 5H10z" fill="#e33b2e" /><path d="M1.300 5A10 10 0 0010 20l4.300-7.500L10 10z" fill="#2da94f" /><path d="M1.300 5L5.700 12.500 10 10V5z" fill="#e33b2e" /><circle cx="10" cy="10" r="4.800" fill="#fff" /><circle cx="10" cy="10" r="3.700" fill="#4285f4" /></svg>,
  <svg key="s" width="20" height="20" viewBox="0 0 20 20" fill="none"><circle cx="10" cy="10" r="9" fill="#fffdf3" stroke="#f0c04e" strokeWidth="1.800" /><path d="M6 5h2.500v2H6zM6 7h2.500v2.500H6zM11.500 5H14v2h-2.500zM11.500 7H14v2.500h-2.500z" stroke="#e9b23a" strokeWidth="1.100" /><path d="M5 12c2 4.500 8 4.500 10 0" stroke="#e9b23a" strokeWidth="1.400" /></svg>,
  <svg key="w" width="20" height="17" viewBox="0 0 20 17"><path d="M.5.500h19v16H.5z" fill="#f4f6f8" stroke="#8d99a8" /><path d="M1 1h18v2H1z" fill="#cdd8e5" /><path d="M2 4h10v10H2z" fill="#3a7f86" /><path d="M2 9l10-5v10H2z" fill="#2f5d85" /><path d="M13.500 4.500h4v10h-4z" fill="#fff" stroke="#b9c3cf" /></svg>,
  <svg key="x" width="21" height="21" viewBox="0 0 21 21"><circle cx="10.500" cy="10.500" r="10.500" fill="#f26a22" /><path d="M2 16.500a10.500 10.500 0 0017 0z" fill="#555" /><text x="10.500" y="15" textAnchor="middle" fontFamily="Liberation Sans, sans-serif" fontWeight="700" fontSize="14" fill="#fff">Xr</text></svg>,
  <svg key="e" width="20" height="20" viewBox="0 0 20 20"><path d="M4 1h13l2 3v15H4z" fill="#f7fbf4" stroke="#7aa765" /><path d="M1 5h11v11H1z" fill="#dff0d5" stroke="#3f8a35" /><path d="M3 7l6 7M9 7l-6 7" stroke="#1f5c22" strokeWidth="2" /><path d="M13 7h5v3h-5zM13 11h5v3h-5zM13 15h5v2h-5zM8 17h4v1.500H8z" fill="#5aa548" /></svg>,
  <svg key="r" width="20" height="20" viewBox="0 0 20 20"><circle cx="9.500" cy="10" r="9.500" fill="#1a1a1a" /><circle cx="10" cy="10" r="5.800" fill="#e31414" /><path d="M12 12l3.500-1 3.500 1v3c0 2.500-2 4-3.500 5-1.500-1-3.500-2.500-3.500-5z" fill="#3b7fd4" stroke="#e8eef6" strokeWidth=".5" /><path d="M15.500 11l3.500 1v3h-3.500zM12 15h3.500v5c-1.500-1-3.500-2.500-3.500-5z" fill="#f2c928" /></svg>,
];
const TASK_NAMES = ["Chrome", "Смайл", "Окно", "Xr", "Excel", "Запись"];

export default function App() {
  return (
    <Shell>
      <Global />
      <TitleBar>
        <Orb aria-label="Office"><OfficeOrb /></Orb>
        <QuickAccess>
          <QuickPill>
            <PlainButton aria-label="Сохранить"><SaveIcon /></PlainButton>
            <PlainButton aria-label="Отменить"><UndoIcon /></PlainButton>
            <Caret />
            <PlainButton aria-label="Вернуть"><UndoIcon flip /></PlainButton>
          </QuickPill>
          <PlainButton aria-label="Настройка панели"><svg width="5" height="6" viewBox="0 0 5 6"><path d="M0 0h5v1H0zM0 3h5L2.500 6z" fill="#3b4d6b" /></svg></PlainButton>
        </QuickAccess>
        <WindowTitle>Моя ферма статистика - <span>Microsoft Excel</span></WindowTitle>
        <WindowButtons $gap={16} $pad={8}>
          <Resizer aria-label="Размер"><svg width="10" height="5" viewBox="0 0 10 5"><path d="M0 2.500L3 0v1.500h4V0l3 2.500L7 5V3.500H3V5z" fill="#fff" stroke="#5c6878" strokeWidth=".5" /></svg></Resizer>
          <PlainButton aria-label="Свернуть"><MinIcon /></PlainButton>
          <PlainButton aria-label="Восстановить"><RestoreIcon /></PlainButton>
          <PlainButton aria-label="Закрыть"><CloseIcon /></PlainButton>
        </WindowButtons>
      </TitleBar>

      <TabStrip>
        {TABS.map((t, i) => <RibbonTab key={t} $on={i === 0}>{t}</RibbonTab>)}
        <WindowButtons $gap={8} $pad={4}>
          <PlainButton aria-label="Справка"><HelpIcon /></PlainButton>
          <PlainButton aria-label="Свернуть книгу"><MinIcon /></PlainButton>
          <PlainButton aria-label="Восстановить книгу"><RestoreIcon /></PlainButton>
          <PlainButton aria-label="Закрыть книгу"><CloseIcon /></PlainButton>
        </WindowButtons>
      </TabStrip>

      <RibbonBar>
        <RibbonGroup w={126} title="Буфер обмена" launch gap={2}>
          <Big w={34} icon={<PasteIcon />} lines={["Вставить"]} />
          <Stack>
            <SmallButton><CutIcon />Вырезать</SmallButton>
            <SmallButton><CopyIcon />Копировать</SmallButton>
            <SmallButton><BrushIcon />Формат по образцу</SmallButton>
          </Stack>
        </RibbonGroup>
        <RibbonGroup w={130} title="Шрифт" launch>
          <Stack $gap={5} $top={4}>
            <Line>
              <Pick w={64} label="Шрифт" options={["Calibri"]} />
              <Pick w={29} label="Размер" options={["12"]} />
              <Cluster $w={30} $push>
                <SizeTool aria-label="Увеличить"><Glyph $size={11}>A</Glyph><svg width="4" height="3" viewBox="0 0 4 3"><path d="M0 3h4L2 0z" fill="#2f568f" /></svg></SizeTool>
                <SizeTool aria-label="Уменьшить"><Glyph $size={9}>A</Glyph><svg width="4" height="3" viewBox="0 0 4 3"><path d="M0 0h4L2 3z" fill="#2f568f" /></svg></SizeTool>
              </Cluster>
            </Line>
            <Line $gap={3}>
              <Cluster $w={54}>
                <Tool aria-label="Полужирный"><Glyph>Ж</Glyph></Tool>
                <Tool aria-label="Курсив"><Glyph $italic>К</Glyph></Tool>
                <Tool aria-label="Подчеркнутый"><Glyph $under>Ч</Glyph><Caret /></Tool>
              </Cluster>
              <Cluster $w={21}><Tool aria-label="Границы"><BordersIcon /><Caret /></Tool></Cluster>
              <Cluster $w={45}>
                <Tool aria-label="Заливка"><FillIcon /><Caret /></Tool>
                <Tool aria-label="Цвет текста"><FontColorIcon /><Caret /></Tool>
              </Cluster>
            </Line>
          </Stack>
        </RibbonGroup>
        <RibbonGroup w={237} title="Выравнивание" launch>
          <Stack $gap={5} $top={4}>
            <Line $gap={2}>
              <Cluster $w={46}>
                <Tool aria-label="По верхнему краю"><Lines rows={[[0, 1, 10], [0, 3, 10], [2, 5, 6]]} /></Tool>
                <Tool aria-label="По середине"><Lines rows={[[0, 3, 10], [0, 5, 10], [2, 7, 6]]} /></Tool>
                <Tool $on aria-label="По нижнему краю"><Lines rows={[[0, 4, 10], [2, 6, 6], [0, 8, 10]]} /></Tool>
              </Cluster>
              <Cluster $w={21}><Tool aria-label="Ориентация"><OrientIcon /><Caret /></Tool></Cluster>
            </Line>
            <Line $gap={4}>
              <Cluster $w={46}>
                <Tool aria-label="По левому краю"><Lines rows={[[0, 1, 10], [0, 3, 7], [0, 5, 10], [0, 7, 7]]} /></Tool>
                <Tool aria-label="По центру"><Lines rows={[[0, 1, 10], [2, 3, 6], [0, 5, 10], [2, 7, 6]]} /></Tool>
                <Tool aria-label="По правому краю"><Lines rows={[[0, 1, 10], [3, 3, 7], [0, 5, 10], [3, 7, 7]]} /></Tool>
              </Cluster>
              <Cluster $w={29}>
                <Tool aria-label="Уменьшить отступ"><IndentIcon /></Tool>
                <Tool aria-label="Увеличить отступ"><IndentIcon right /></Tool>
              </Cluster>
            </Line>
          </Stack>
          <Divider />
          <Stack $gap={5} $top={4}>
            <SmallButton><WrapIcon />Перенос текста</SmallButton>
            <SmallButton><MergeIcon />Объединить и поместить в центре<Caret /></SmallButton>
          </Stack>
        </RibbonGroup>
        <RibbonGroup w={91} title="Число" launch>
          <Stack $gap={5} $top={4}>
            <Pick w={85} label="Формат числа" options={["Общий"]} />
            <Line $gap={2}>
              <Cluster $w={53}>
                <Tool aria-label="Денежный"><MoneyIcon /><Caret /></Tool>
                <Tool>%</Tool>
                <Tool>000</Tool>
              </Cluster>
              <Cluster $w={30}>
                <Tool aria-label="Больше знаков"><DecimalTool><span><em>←</em>,0</span><span>,00</span></DecimalTool></Tool>
                <Tool aria-label="Меньше знаков"><DecimalTool><span>,00</span><span><em>→</em>,0</span></DecimalTool></Tool>
              </Cluster>
            </Line>
          </Stack>
        </RibbonGroup>
        <RibbonGroup w={363} title="Стили" pad={1}>
          <Big w={72} icon={<CondIcon />} lines={["Условное", "форматирование"]} />
          <Big w={62} icon={<TableIcon />} lines={["Форматировать", "как таблицу"]} />
          <Gallery>
            <StyleSwatch $bg="#fff" $fg="#111" $bd="#e6a93c" $thick>Обычный</StyleSwatch>
            <StyleSwatch $bg="#ffeb9c" $fg="#a87b1a">Нейтральный</StyleSwatch>
            <StyleSwatch $bg="#ffc7ce" $fg="#a8262c">Плохой</StyleSwatch>
            <StyleSwatch $bg="#c6efce" $fg="#1d6b22">Хороший</StyleSwatch>
            <StyleSwatch $bg="#ffcc99" $fg="#6a5a86" $bd="#7f7f7f">Ввод</StyleSwatch>
            <StyleSwatch $bg="#f2f2f2" $fg="#222" $bd="#3f3f3f">Вывод</StyleSwatch>
          </Gallery>
          <GalleryScroll>
            <button aria-label="Вверх"><svg width="4" height="3" viewBox="0 0 4 3"><path d="M0 3h4L2 0z" fill="#a0b3cf" /></svg></button>
            <button aria-label="Вниз"><svg width="4" height="3" viewBox="0 0 4 3"><path d="M0 0h4L2 3z" fill="#4a6ea5" /></svg></button>
            <button aria-label="Ещё"><svg width="5" height="6" viewBox="0 0 5 6"><path d="M0 0h5v1H0zM0 3h5L2.500 6z" fill="#4a6ea5" /></svg></button>
          </GalleryScroll>
        </RibbonGroup>
        <RibbonGroup w={101} title="Ячейки" pad={1}>
          <Big w={35} icon={<CellsIcon kind="insert" />} lines={["Вставить"]} />
          <Big w={31} icon={<CellsIcon kind="delete" />} lines={["Удалить"]} />
          <Big w={31} icon={<CellsIcon kind="format" />} lines={["Формат"]} />
        </RibbonGroup>
        <RibbonGroup w={157} title="Редактирование" pad={4}>
          <Stack>
            <SmallButton><SigmaIcon />Автосумма <Caret /></SmallButton>
            <SmallButton><FillDownIcon />Заполнить <Caret /></SmallButton>
            <SmallButton><EraserIcon />Очистить <Caret /></SmallButton>
          </Stack>
          <Big w={50} icon={<SortIcon />} lines={["Сортировка", "и фильтр"]} />
          <Big w={40} icon={<BinocularsIcon />} lines={["Найти и", "выделить"]} />
        </RibbonGroup>
      </RibbonBar>

      <FormulaBar>
        <NameBox><input aria-label="Имя" defaultValue="R16" /><Caret c="#222" /></NameBox>
        <FxArea><Knob /><button aria-label="Вставить функцию">fx</button></FxArea>
        <FormulaInput aria-label="Строка формул" />
        <ExpandButton aria-label="Развернуть"><svg width="6" height="7" viewBox="0 0 6 7" fill="none" stroke="#222" strokeWidth="1.200"><path d="M.5.500L3 3 5.500.500M.5 3.500L3 6l2.500-2.500" /></svg></ExpandButton>
      </FormulaBar>

      <Workspace>
        <SheetView>
          <Grid>
            <colgroup>
              <col width={17} />
              {WIDTHS.map((w, i) => <col key={i} width={w} />)}
              <col />
            </colgroup>
            <thead>
              <tr>
                <Corner />
                {COLS.map((c) => <ColHead key={c} $on={c === "R"}>{c}</ColHead>)}
                <ColHead />
              </tr>
            </thead>
            <tbody>
              {HEIGHTS.map((h, i) => (
                <tr key={i}>
                  <RowHead $h={h} $on={i === 15}>{i + 1}</RowHead>
                  {COLS.map((_, c) => <SheetCell key={c} c={c} r={i + 1} />)}
                  <Td $a="l" $right="#fff" $bottom={LINE} />
                </tr>
              ))}
            </tbody>
          </Grid>
          <Chart />
          <Pointer><svg width="11" height="11" viewBox="0 0 11 11"><path d="M3.500.500h4v3h3v4h-3v3h-4v-3h-3v-4h3z" fill="#fff" stroke="#222" /></svg></Pointer>
        </SheetView>
        <VScroll>
          <VSplit />
          <ScrollArrow aria-label="Вверх"><Arrow d="u" /></ScrollArrow>
          <VThumb><svg width="6" height="5" viewBox="0 0 6 5" fill="#7d8ba3"><path d="M0 0h6v1H0zM0 2h6v1H0zM0 4h6v1H0z" /></svg></VThumb>
          <VRest><Arrow d="d" /></VRest>
        </VScroll>
      </Workspace>

      <SheetBar>
        <NavButtons><Arrow d="l" bar /><Arrow d="l" /><Arrow d="r" /><Arrow d="r" bar /></NavButtons>
        <TabList>
          {SHEETS.map((s, i) => (
            <SheetTab key={s}>{s}{i < SHEETS.length - 1 ? <Slant left="#cfe1f8" right="#cfe1f8" /> : <svg width="4" height="10" />}</SheetTab>
          ))}
          <SheetTab $on>14й месяц<Slant left="#fff" right="#cfe1f8" /></SheetTab>
          <SheetTab aria-label="Вставить лист">
            <svg width="12" height="9" viewBox="0 0 12 9"><path d="M2.500 2.500h6l2 2v4h-8z" fill="#eef4fc" stroke="#6f8fbf" /><path d="M3 0v6M0 3h6M1 1l4 4M5 1L1 5" stroke="#e6a52c" strokeWidth=".9" /></svg>
            <Slant left="#cfe1f8" right="#8fb0dd" />
          </SheetTab>
        </TabList>
        <HScroll>
          <HSplit /><ScrollArrow aria-label="Влево"><Arrow d="l" /></ScrollArrow>
          <HThumb><svg width="5" height="5" viewBox="0 0 5 5" fill="#7d8ba3"><path d="M0 0h1v5H0zM2 0h1v5H2zM4 0h1v5H4z" /></svg></HThumb>
          <HRest><Arrow d="r" /></HRest>
          <HSplit /><svg width="11" height="10" />
        </HScroll>
      </SheetBar>

      <StatusBar>
        <StatusText>Готово</StatusText>
        <StatusTools>
          <Views>
            <ViewButton $on aria-label="Обычный"><svg width="9" height="8" viewBox="0 0 9 8" fill="#fff" stroke="#8a6a2a"><path d="M.5.500h8v7h-8zM3.500.500v7M6 .5v7" /></svg></ViewButton>
            <ViewButton aria-label="Разметка"><svg width="9" height="8" viewBox="0 0 9 8" fill="#fff" stroke="#55657f"><path d="M.5.500h8v7h-8zM2.500 2h4v4h-4z" /></svg></ViewButton>
            <ViewButton aria-label="Страничный"><svg width="9" height="8" viewBox="0 0 9 8" fill="#fff" stroke="#55657f"><path d="M.5.500h8v7h-8zM3 .5V5h3V.5" /></svg></ViewButton>
          </Views>
          <span>100%</span>
          <PlainButton aria-label="Уменьшить масштаб"><svg width="10" height="10" viewBox="0 0 10 10" fill="#dbe7f6" stroke="#4c6289"><circle cx="5" cy="5" r="4.500" /><path d="M2.500 5h5" /></svg></PlainButton>
          <Zoom type="range" aria-label="Масштаб" min={0} max={100} defaultValue={50} />
          <PlainButton aria-label="Увеличить масштаб"><svg width="10" height="10" viewBox="0 0 10 10" fill="#dbe7f6" stroke="#4c6289"><circle cx="5" cy="5" r="4.500" /><path d="M2.500 5h5M5 2.500v5" /></svg></PlainButton>
        </StatusTools>
      </StatusBar>

      <Taskbar>
        <StartButton aria-label="Пуск">
          <svg width="25" height="25" viewBox="0 0 25 25">
            <defs><radialGradient id="start" cx=".5" cy=".85" r=".8"><stop offset="0" stopColor="#6fd0ea" /><stop offset=".5" stopColor="#2c6da8" /><stop offset="1" stopColor="#24466f" /></radialGradient></defs>
            <circle cx="12.500" cy="12.500" r="12" fill="url(#start)" stroke="#9fb8d3" strokeWidth=".8" />
            <path d="M6.500 7.500c2-1.200 3.500-1 5.300-.2l-1.200 4.900c-1.800-.8-3.500-.9-5.300.2z" fill="#f0642d" />
            <path d="M12.800 7.700c1.800.8 3.400.9 5.300-.1l-1.200 4.900c-1.800 1-3.500.9-5.300.1z" fill="#96c93d" />
            <path d="M5 13.300c1.800-1 3.500-1 5.300-.2l-1.200 4.800c-1.800-.8-3.400-.8-5.200.2z" fill="#45a3e0" />
            <path d="M11.300 13.600c1.800.8 3.500.8 5.300-.2l-1.200 4.900c-1.800 1-3.500.9-5.300.1z" fill="#fbd03b" />
          </svg>
        </StartButton>
        {TaskIcons.map((icon, i) => <TaskButton key={i} $on={i === 4} aria-label={TASK_NAMES[i]}>{icon}</TaskButton>)}
        <Tray>
          <Language>RU</Language>
          <svg width="6" height="4" viewBox="0 0 6 4"><path d="M0 4h6L3 0z" fill="#fff" /></svg>
          <svg width="9" height="10" viewBox="0 0 9 10"><path d="M1 0v10" stroke="#fff" /><path d="M1.500 1c2-1 3 1 4 .5L9 1 8 5.500c-2 1-3-.5-6.500 0z" fill="#fff" /></svg>
          <svg width="10" height="10" viewBox="0 0 10 10" fill="none" stroke="#fff"><path d="M3 2.500h6.500V8H3zM4 9.500h5M1 0v3M0 3h3v2.500H0z" /></svg>
          <Reading $c="#f4f01c">6l</Reading>
          <Reading $c="#e8202a">70</Reading>
          <svg width="10" height="10" viewBox="0 0 10 10"><path d="M0 3.500h2L5 1v8L2 6.500H0z" fill="#fff" /><path d="M6.500 3c1 1 1 3 0 4M8 1.500c2 2 2 5 0 7" stroke="#fff" fill="none" /></svg>
          <Clock>19:35<br />05.06.2018</Clock>
          <ShowDesktop aria-label="Свернуть все окна" />
        </Tray>
      </Taskbar>
    </Shell>
  );
}
